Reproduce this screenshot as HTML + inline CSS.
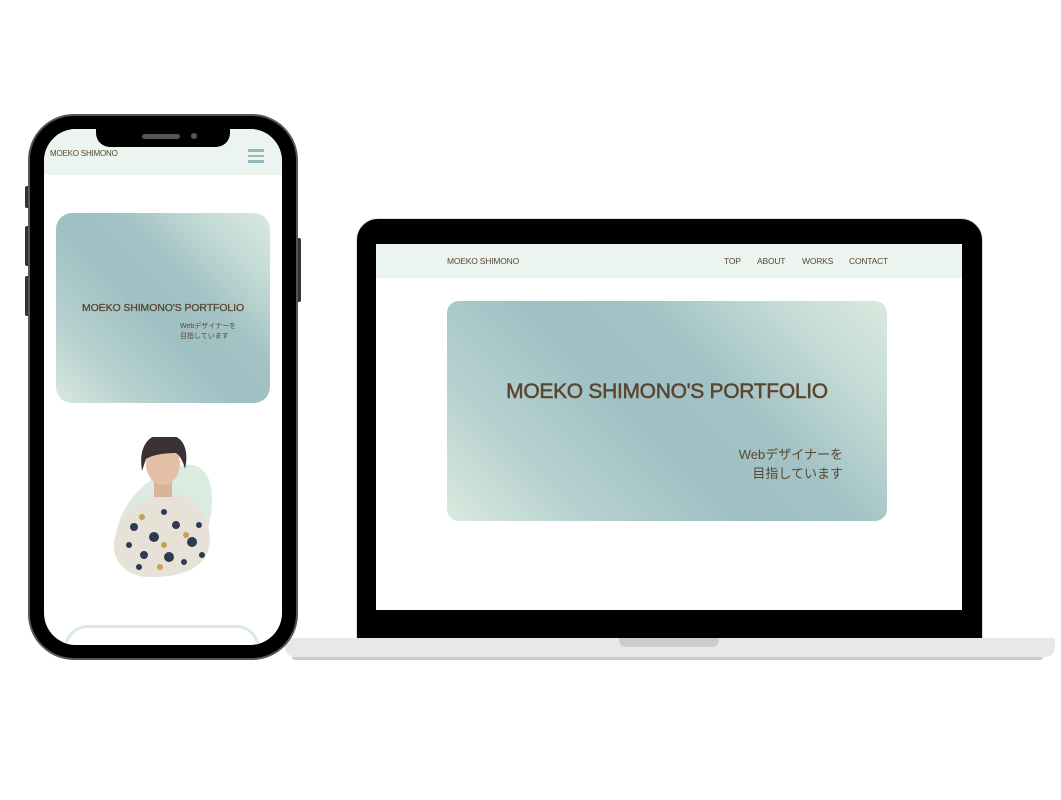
<!DOCTYPE html>
<html><head><meta charset="utf-8"><style>
*{margin:0;padding:0;box-sizing:border-box}
body{width:1061px;height:800px;background:#fff;position:relative;overflow:hidden;font-family:"Liberation Sans","Noto Sans CJK JP",sans-serif;color:#5a4630}
.abs{position:absolute}
.grad{background:linear-gradient(45deg,#d9eadf 0%,#b6d0cf 22%,#9fc0c4 45%,#a2c2c5 62%,#c3dad5 82%,#d9eadf 100%)}
.b{-webkit-text-stroke:0.5px #5a4630}
</style></head><body>

<!-- laptop -->
<div class="abs" style="left:356px;top:218px;width:627px;height:422px;background:#000;border-radius:22px 22px 0 0;border:1px solid #ddd"></div>
<div class="abs" style="left:376px;top:244px;width:586px;height:366px;background:#fff"></div>
<div class="abs" style="left:376px;top:244px;width:586px;height:34px;background:#ecf4ef"></div>
<div class="abs" style="left:447px;top:256px;font-size:8.5px;letter-spacing:-0.2px">MOEKO SHIMONO</div>
<div class="abs" style="left:724px;top:256px;font-size:8.5px;letter-spacing:-0.2px">TOP</div>
<div class="abs" style="left:757px;top:256px;font-size:8.5px;letter-spacing:-0.2px">ABOUT</div>
<div class="abs" style="left:802px;top:256px;font-size:8.5px;letter-spacing:-0.2px">WORKS</div>
<div class="abs" style="left:849px;top:256px;font-size:8.5px;letter-spacing:-0.2px">CONTACT</div>
<div class="abs grad" style="left:447px;top:301px;width:440px;height:220px;border-radius:12px"></div>
<div class="abs b" style="left:447px;top:380px;width:440px;text-align:center;font-size:21px;letter-spacing:-0.3px">MOEKO SHIMONO'S PORTFOLIO</div>
<div class="abs" style="left:700px;top:445px;width:143px;text-align:right;font-size:13px;line-height:19px">Webデザイナーを<br>目指しています</div>
<div class="abs" style="left:285px;top:638px;width:770px;height:19px;background:#e8e8e8;border-radius:0 0 10px 10px"></div>
<div class="abs" style="left:292px;top:657px;width:751px;height:3px;background:#ccc;border-radius:0 0 6px 6px"></div>
<div class="abs" style="left:619px;top:638px;width:100px;height:9px;background:#ccc;border-radius:0 0 7px 7px"></div>

<!-- phone -->
<div class="abs" style="left:25px;top:186px;width:5px;height:22px;background:#333;border-radius:2px"></div>
<div class="abs" style="left:25px;top:226px;width:5px;height:40px;background:#333;border-radius:2px"></div>
<div class="abs" style="left:25px;top:276px;width:5px;height:40px;background:#333;border-radius:2px"></div>
<div class="abs" style="left:296px;top:238px;width:5px;height:64px;background:#333;border-radius:2px"></div>
<div class="abs" style="left:28px;top:114px;width:270px;height:546px;background:#000;border-radius:46px;border:2px solid #555"></div>
<div class="abs" style="left:44px;top:129px;width:238px;height:516px;background:#fff;border-radius:32px;overflow:hidden">
  <div class="abs" style="left:0;top:0;width:238px;height:46px;background:#ecf4ef"></div>
  <div class="abs" style="left:6px;top:20px;font-size:8px;letter-spacing:-0.2px">MOEKO SHIMONO</div>
  <div class="abs" style="left:204px;top:20px;width:16px;height:2.5px;background:#93b9bc"></div>
  <div class="abs" style="left:204px;top:25.5px;width:16px;height:2.5px;background:#93b9bc"></div>
  <div class="abs" style="left:204px;top:31px;width:16px;height:2.5px;background:#93b9bc"></div>
  <div class="abs grad" style="left:12px;top:84px;width:214px;height:190px;border-radius:16px"></div>
  <div class="abs b" style="left:12px;top:173px;width:214px;text-align:center;font-size:10.5px;letter-spacing:-0.1px;-webkit-text-stroke:0.3px #5a4630">MOEKO SHIMONO'S PORTFOLIO</div>
  <div class="abs" style="left:136px;top:193px;font-size:7px;line-height:10px">Webデザイナーを<br>目指しています</div>
  <svg class="abs" style="left:60px;top:308px" width="120" height="145" viewBox="0 0 120 145">
    <path d="M80 28 C105 25 112 50 106 82 C100 115 80 140 45 140 C15 140 5 115 15 85 C25 55 55 32 80 28Z" fill="#dcebe0"/>
    <path d="M10 105 C14 80 32 66 50 58 L80 58 C98 68 106 84 106 105 C104 125 88 138 55 140 C25 140 8 128 10 105Z" fill="#e6e2d8"/>
    <g fill="#2e3a52"><circle cx="30" cy="90" r="4"/><circle cx="50" cy="100" r="5"/><circle cx="72" cy="88" r="4"/><circle cx="88" cy="105" r="5"/><circle cx="40" cy="118" r="4"/><circle cx="65" cy="120" r="5"/><circle cx="25" cy="108" r="3"/><circle cx="95" cy="88" r="3"/><circle cx="80" cy="125" r="3"/><circle cx="60" cy="75" r="3"/><circle cx="35" cy="130" r="3"/><circle cx="98" cy="118" r="3"/></g>
    <g fill="#c8a050"><circle cx="38" cy="80" r="3"/><circle cx="60" cy="108" r="3"/><circle cx="82" cy="98" r="3"/><circle cx="56" cy="130" r="3"/></g>
    <rect x="50" y="44" width="18" height="16" fill="#d9b49a"/>
    <ellipse cx="59" cy="27" rx="17" ry="21" fill="#e3c0a6"/>
    <path d="M38 34 C34 9 45 -3 60 -3 C77 -3 86 9 81 32 C79 24 76 19 72 16 C60 16 48 18 42 22 Z" fill="#3a3232"/>
  </svg>
  <div class="abs" style="left:20px;top:496px;width:196px;height:60px;border:3px solid #dcebe0;border-radius:24px"></div>
</div>
<div class="abs" style="left:96px;top:128px;width:134px;height:19px;background:#000;border-radius:0 0 14px 14px"></div>
<div class="abs" style="left:142px;top:134px;width:38px;height:5px;background:#555;border-radius:3px"></div>
<div class="abs" style="left:191px;top:133px;width:6px;height:6px;background:#555;border-radius:50%"></div>
</body></html>
